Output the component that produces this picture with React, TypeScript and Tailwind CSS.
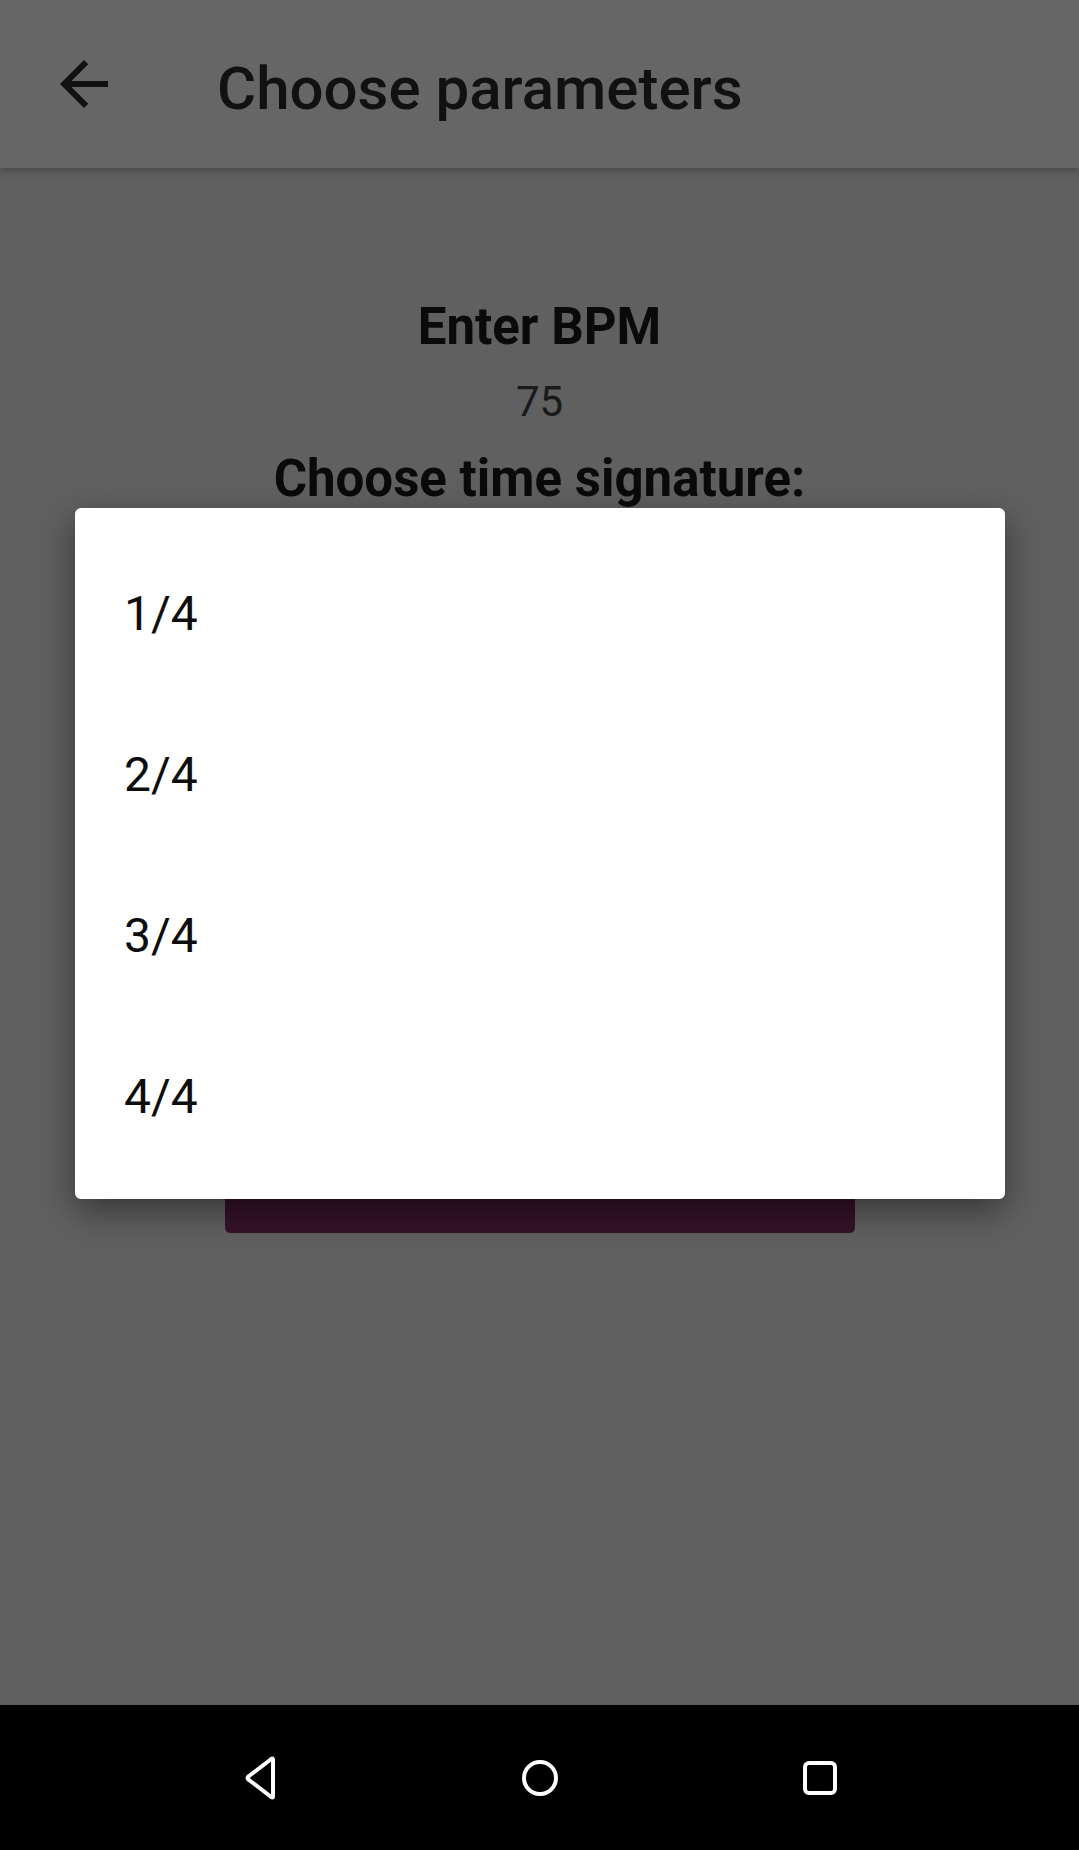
import React from 'react'

const signatures = ['1/4', '2/4', '3/4', '4/4']

const BackArrow = () => (
  <svg width="72" height="72" viewBox="0 0 24 24" fill="#111111">
    <path d="M20 11H7.83l5.59-5.59L12 4l-8 8 8 8 1.41-1.41L7.83 13H20v-2z" />
  </svg>
)

const NavBar = () => (
  <div className="flex h-[145px] items-center justify-center bg-black">
    <div className="flex w-[280px] justify-center">
      <svg width="40" height="44" viewBox="0 0 40 44" fill="none" stroke="white" strokeWidth="4" strokeLinejoin="round">
        <path d="M33 4 L33 40 Q33 43 30 40 L9 24 Q6 22 9 20 L30 4 Q33 1 33 4 Z" />
      </svg>
    </div>
    <div className="flex w-[280px] justify-center">
      <svg width="40" height="40" viewBox="0 0 40 40" fill="none" stroke="white" strokeWidth="4">
        <circle cx="20" cy="20" r="16" />
      </svg>
    </div>
    <div className="flex w-[280px] justify-center">
      <svg width="38" height="38" viewBox="0 0 38 38" fill="none" stroke="white" strokeWidth="4">
        <rect x="4" y="4" width="30" height="30" rx="4" />
      </svg>
    </div>
  </div>
)

export default function App() {
  return (
    <div className="relative flex h-[1850px] w-full flex-col bg-[#5f605f] font-['Roboto',sans-serif]">
      {/* toolbar */}
      <div className="relative z-10 flex h-[168px] items-center bg-[#666666] shadow-[0_3px_8px_rgba(0,0,0,0.25)]">
        <div className="ml-[48px] flex">
          <BackArrow />
        </div>
        <h1 className="ml-[97px] pt-[9px] text-[60px] font-medium leading-[70px] text-[#111111]">
          Choose parameters
        </h1>
      </div>

      {/* page content, dimmed by the dialog */}
      <div className="flex flex-1 flex-col items-center">
        <p className="mt-[128px] text-[51px] font-bold leading-[62px] text-[#0a0a0a]">Enter BPM</p>
        <p className="mt-[19px] text-[42px] leading-[50px] text-[#1a1a1a]">75</p>
        <p className="mt-[21px] text-[51px] font-bold leading-[62px] text-[#0a0a0a]">Choose time signature:</p>
        <div className="mt-[590px] h-[133px] w-[630px] rounded-[5px] bg-[#35122a]" />
      </div>

      <NavBar />

      {/* time signature dialog */}
      <div className="absolute left-[75px] top-[508px] w-[930px] rounded-[6px] bg-white pt-[25px] pb-[22px] shadow-[0_12px_36px_rgba(0,0,0,0.45)]">
        {signatures.map((s) => (
          <div key={s} className="flex h-[161px] items-center pl-[49px]">
            <span className="text-[48px] leading-[56px] text-[#0d0d0d]">{s}</span>
          </div>
        ))}
      </div>
    </div>
  )
}
